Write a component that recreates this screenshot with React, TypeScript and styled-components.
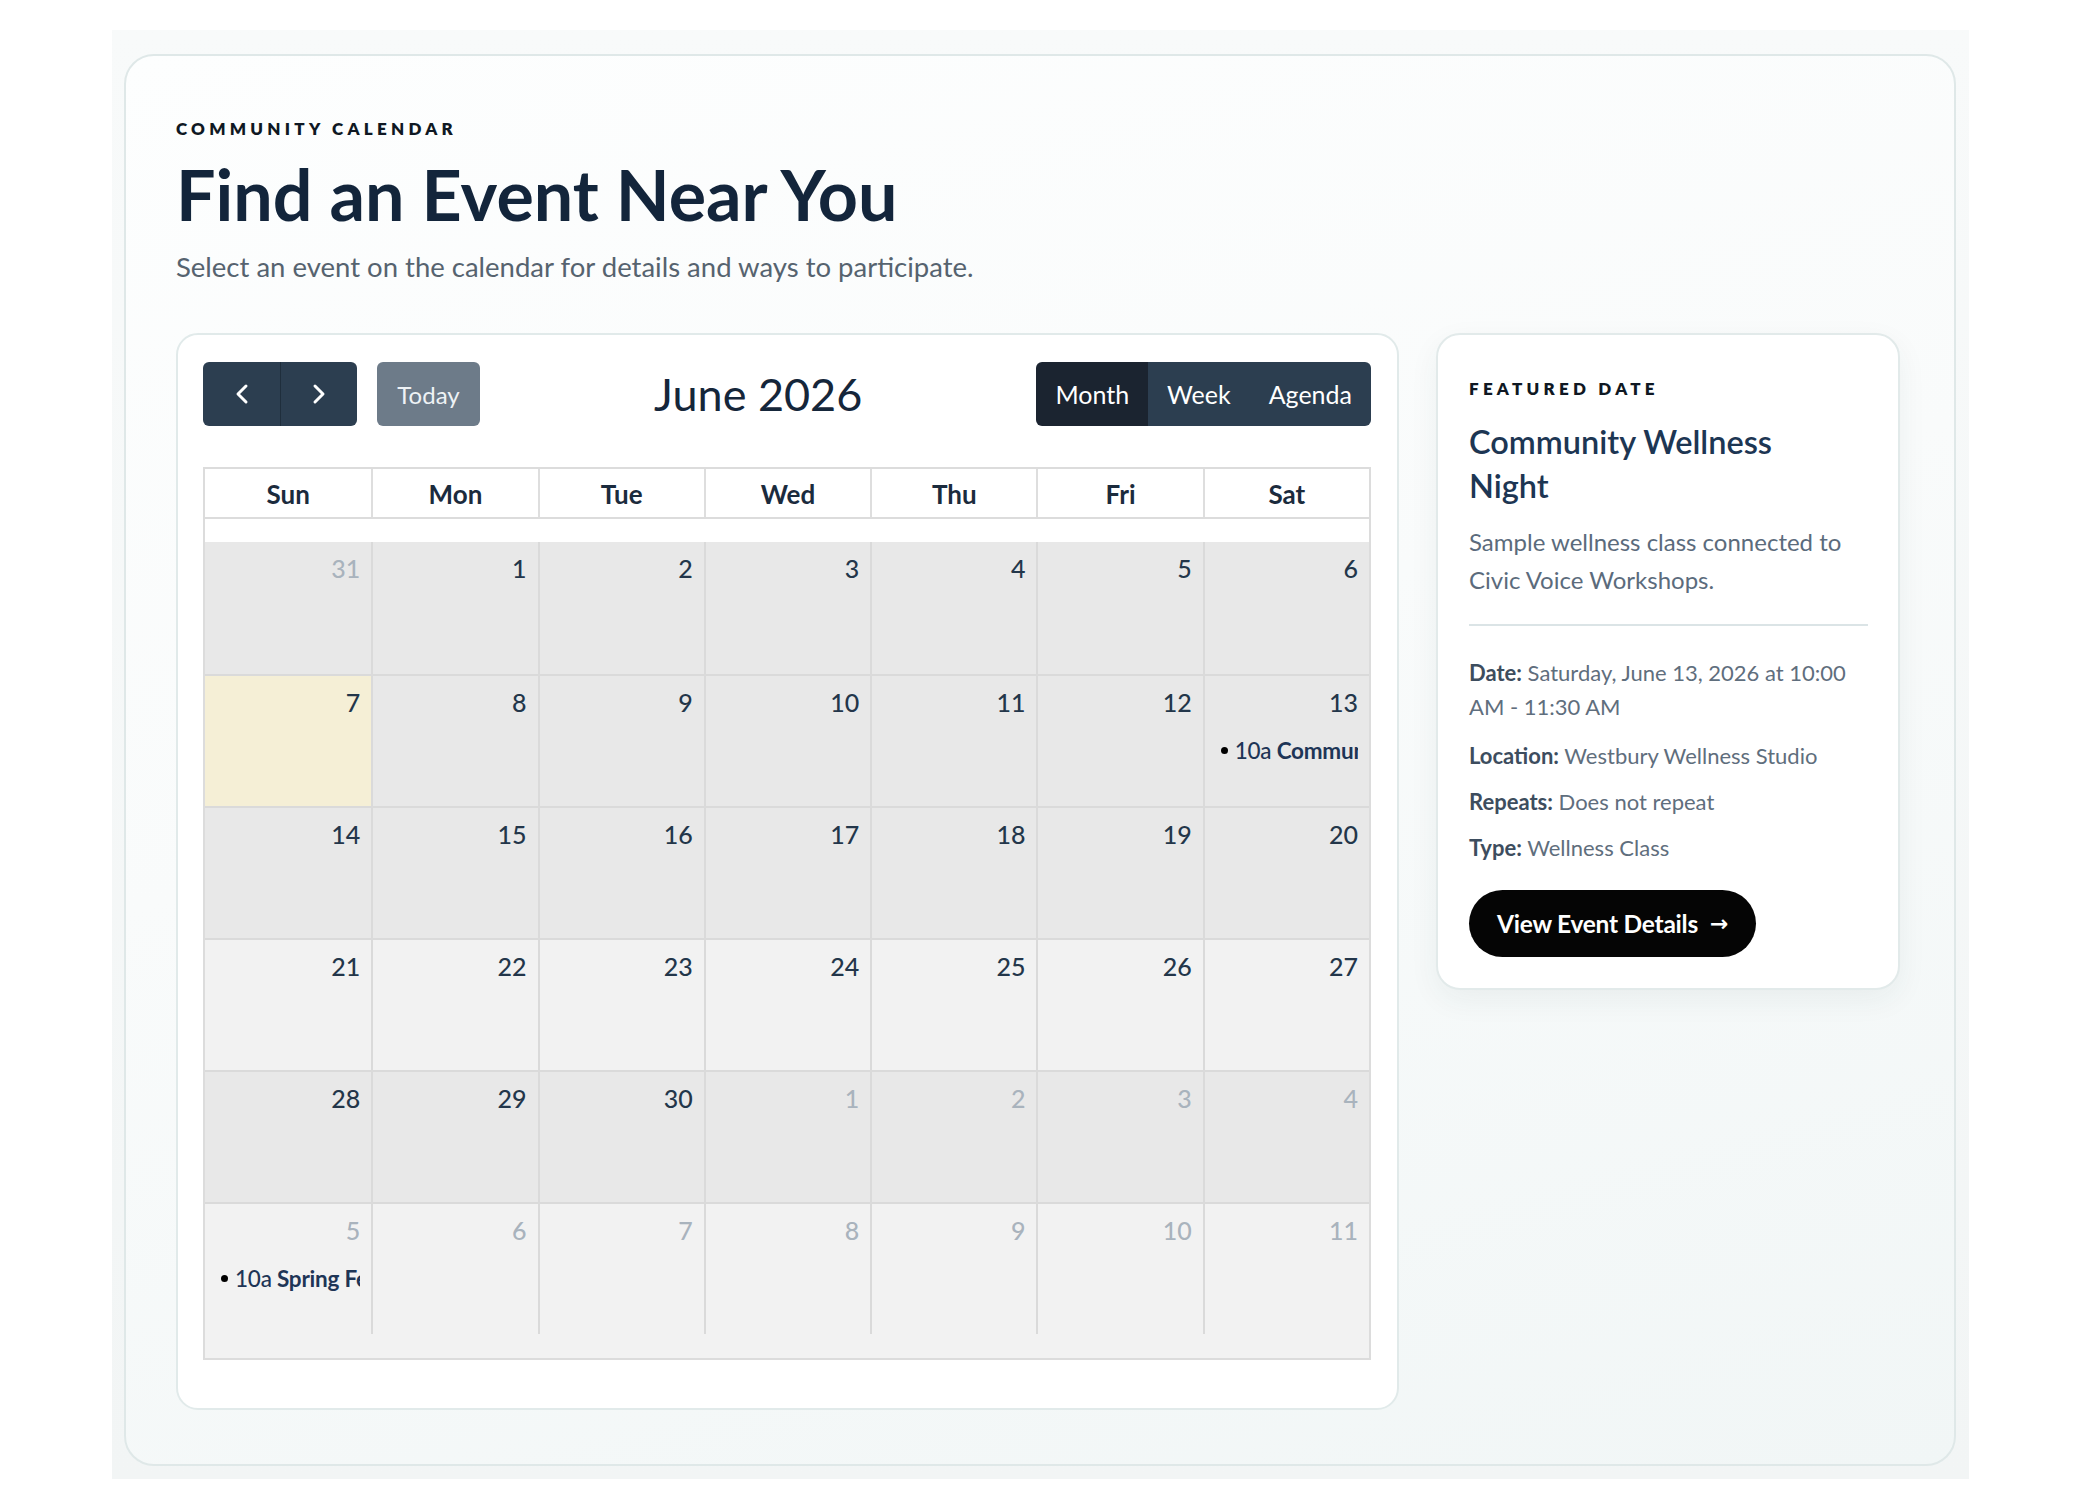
import styled, { createGlobalStyle } from "styled-components";

const GlobalStyle = createGlobalStyle`
  body {
    margin: 0;
    background: #ffffff;
    font-family: Lato, "Open Sans", "Noto Sans", sans-serif;
  }
  * {
    box-sizing: border-box;
  }
`;

const Shell = styled.div`
  margin: 30px 0 0 112px;
  width: 1857px;
  padding: 24px 13px 13px 12px;
  background: linear-gradient(180deg, #f8fafa 0%, #f2f5f5 100%);
`;

const Card = styled.section`
  border: 2px solid #dfe8e8;
  border-radius: 30px;
  background: linear-gradient(165deg, #fdfefe 0%, #f9fbfb 45%, #f1f6f6 100%);
  padding: 63px 54px 54px 50px;
`;

const Eyebrow = styled.div`
  font-size: 17px;
  font-weight: 800;
  letter-spacing: 0.25em;
  line-height: 1.2;
  text-transform: uppercase;
  color: #0f1823;
`;

const Title = styled.h1`
  margin: 17px 0 0;
  font-size: 70px;
  font-weight: 700;
  line-height: 77px;
  color: #13253b;
`;

const Lead = styled.p`
  margin: 16px 0 0;
  font-size: 27.5px;
  line-height: 35px;
  color: #56636f;
`;

const Layout = styled.div`
  display: grid;
  grid-template-columns: 1223px 1fr;
  gap: 37px;
  align-items: start;
  margin-top: 49px;
`;

/* calendar */

const CalendarPanel = styled.div`
  background: #ffffff;
  border: 2px solid #e1eaea;
  border-radius: 22px;
  padding: 27px 26px 48px 25px;
`;

const Toolbar = styled.div`
  display: flex;
  align-items: center;
  height: 64px;
  margin-bottom: 41px;
`;

const NavGroup = styled.div`
  display: flex;
  border-radius: 6px;
  overflow: hidden;
  background: #2c3e50;
`;

const NavButton = styled.button`
  width: 77px;
  height: 64px;
  border: none;
  background: transparent;
  display: flex;
  align-items: center;
  justify-content: center;
  cursor: pointer;
  & + & {
    border-left: 1px solid #1f2e3c;
  }
`;

const TodayButton = styled.button`
  margin-left: 20px;
  width: 103px;
  height: 64px;
  border: none;
  border-radius: 6px;
  background: #6d7b89;
  color: #eef2f5;
  font-family: inherit;
  font-size: 24px;
  cursor: pointer;
`;

const MonthLabel = styled.div`
  flex: 1;
  text-align: center;
  font-size: 45px;
  font-weight: 400;
  color: #15263a;
`;

const ViewGroup = styled.div`
  display: flex;
  border-radius: 6px;
  overflow: hidden;
`;

const ViewButton = styled.button<{ $active?: boolean }>`
  height: 64px;
  padding: 0 19px;
  border: none;
  background: ${(p) => (p.$active ? "#1b2430" : "#2c3e50")};
  color: #ffffff;
  font-family: inherit;
  font-size: 25px;
  cursor: pointer;
`;

const Grid = styled.div`
  border: 2px solid #dcdcdc;
  background: #f2f2f2;
`;

const HeadRow = styled.div`
  display: grid;
  grid-template-columns: repeat(7, 1fr);
  background: #ffffff;
  border-bottom: 2px solid #dcdcdc;
`;

const HeadCell = styled.div`
  height: 48px;
  padding-top: 2px;
  display: flex;
  align-items: center;
  justify-content: center;
  font-size: 26px;
  font-weight: 700;
  color: #1b2b3d;
  & + & {
    border-left: 2px solid #dedede;
  }
`;

const Strip = styled.div`
  height: 23px;
  background: #ffffff;
`;

const WeekRow = styled.div<{ $light?: boolean }>`
  display: grid;
  grid-template-columns: repeat(7, 1fr);
  height: 132px;
  background: ${(p) => (p.$light ? "#f2f2f2" : "#e8e8e8")};
  & + & {
    border-top: 2px solid #dadada;
  }
`;

const DayCell = styled.div<{ $today?: boolean }>`
  min-width: 0;
  padding: 11px 11px 0 0;
  background: ${(p) => (p.$today ? "#f5efd6" : "transparent")};
  & + & {
    border-left: 2px solid #dadada;
  }
`;

const DayNumber = styled.div<{ $muted?: boolean }>`
  text-align: right;
  font-size: 25px;
  line-height: 30px;
  font-weight: 500;
  color: ${(p) => (p.$muted ? "#a9b3bd" : "#23364a")};
`;

const EventLine = styled.div`
  margin-top: 20px;
  padding-left: 16px;
  display: flex;
  align-items: center;
  gap: 7px;
  height: 26px;
  white-space: nowrap;
  overflow: hidden;
  font-size: 22.5px;
  color: #1e3556;
`;

const Dot = styled.span`
  flex: none;
  width: 7px;
  height: 7px;
  border-radius: 50%;
  background: #000000;
`;

const EventLabel = styled.span`
  font-weight: 700;
  letter-spacing: -0.01em;
`;

const EventTime = styled.span`
  font-weight: 500;
`;

const Filler = styled.div`
  height: 24px;
`;

/* featured card */

const FeatureCard = styled.aside`
  background: #ffffff;
  border: 2px solid #e2eaea;
  border-radius: 24px;
  padding: 44px 30px 31px 31px;
  box-shadow: 0 10px 30px rgba(30, 60, 70, 0.06);
`;

const FeatureTitle = styled.h2`
  margin: 20px 0 0;
  max-width: 340px;
  font-size: 32.5px;
  font-weight: 600;
  line-height: 44px;
  color: #1d3653;
`;

const FeatureText = styled.p`
  margin: 15px 0 0;
  font-size: 24px;
  line-height: 38px;
  color: #5b6b7c;
`;

const Divider = styled.hr`
  border: none;
  border-top: 2px solid #dbe4e6;
  margin: 25px 0 30px;
`;

const Detail = styled.p<{ $spaced?: boolean }>`
  margin: 0 0 ${(p) => (p.$spaced ? "15px" : "12px")};
  font-size: 22px;
  line-height: 34px;
  color: #5f6e7d;
  b {
    color: #3d4d5e;
    font-weight: 700;
  }
`;

const DetailsButton = styled.button`
  margin-top: 13px;
  height: 67px;
  padding: 0 28px;
  display: inline-flex;
  align-items: center;
  gap: 12px;
  border: none;
  border-radius: 999px;
  background: #050505;
  color: #ffffff;
  font-family: inherit;
  font-size: 24.5px;
  font-weight: 700;
  letter-spacing: -0.01em;
  cursor: pointer;
`;

const Arrow = styled.span`
  font-size: 22px;
  font-family: "DejaVu Sans", sans-serif;
`;

const Chevron = ({ dir }: { dir: "left" | "right" }) => (
  <svg width="14" height="22" viewBox="0 0 14 22">
    <polyline
      points={dir === "left" ? "11,3 3,11 11,19" : "3,3 11,11 3,19"}
      fill="none"
      stroke="#ffffff"
      strokeWidth="3"
      strokeLinecap="round"
      strokeLinejoin="round"
    />
  </svg>
);

type Day = { n: number; muted?: boolean; today?: boolean; event?: { time: string; title: string } };

const week = (start: number, len: number, muted = false): Day[] =>
  Array.from({ length: len }, (_, i) => ({ n: start + i, muted }));

const weeks: { light?: boolean; days: Day[] }[] = [
  { days: [{ n: 31, muted: true }, ...week(1, 6)] },
  { days: week(7, 7) },
  { days: week(14, 7) },
  { light: true, days: week(21, 7) },
  { days: [...week(28, 3), ...week(1, 4, true)] },
  { light: true, days: week(5, 7, true) },
];

weeks[1].days[0].today = true;
weeks[1].days[6].event = { time: "10a", title: "Community Wellness Night" };
weeks[5].days[0].event = { time: "10a", title: "Spring Festival" };

const dayNames = ["Sun", "Mon", "Tue", "Wed", "Thu", "Fri", "Sat"];

const App: React.FC = () => {
  return (
    <>
      <GlobalStyle />
      <Shell>
        <Card>
          <Eyebrow>Community Calendar</Eyebrow>
          <Title>Find an Event Near You</Title>
          <Lead>Select an event on the calendar for details and ways to participate.</Lead>

          <Layout>
            <CalendarPanel>
              <Toolbar>
                <NavGroup>
                  <NavButton aria-label="Previous">
                    <Chevron dir="left" />
                  </NavButton>
                  <NavButton aria-label="Next">
                    <Chevron dir="right" />
                  </NavButton>
                </NavGroup>
                <TodayButton>Today</TodayButton>
                <MonthLabel>June 2026</MonthLabel>
                <ViewGroup>
                  <ViewButton $active>Month</ViewButton>
                  <ViewButton>Week</ViewButton>
                  <ViewButton>Agenda</ViewButton>
                </ViewGroup>
              </Toolbar>

              <Grid>
                <HeadRow>
                  {dayNames.map((d) => (
                    <HeadCell key={d}>{d}</HeadCell>
                  ))}
                </HeadRow>
                <Strip />
                {weeks.map((w, i) => (
                  <WeekRow key={i} $light={w.light}>
                    {w.days.map((d, j) => (
                      <DayCell key={j} $today={d.today}>
                        <DayNumber $muted={d.muted}>{d.n}</DayNumber>
                        {d.event && (
                          <EventLine>
                            <Dot />
                            <EventLabel>
                              <EventTime>{d.event.time}</EventTime> {d.event.title}
                            </EventLabel>
                          </EventLine>
                        )}
                      </DayCell>
                    ))}
                  </WeekRow>
                ))}
                <Filler />
              </Grid>
            </CalendarPanel>

            <FeatureCard>
              <Eyebrow>Featured Date</Eyebrow>
              <FeatureTitle>Community Wellness Night</FeatureTitle>
              <FeatureText>Sample wellness class connected to Civic Voice Workshops.</FeatureText>
              <Divider />
              <Detail $spaced>
                <b>Date:</b> Saturday, June 13, 2026 at 10:00 AM - 11:30 AM
              </Detail>
              <Detail>
                <b>Location:</b> Westbury Wellness Studio
              </Detail>
              <Detail>
                <b>Repeats:</b> Does not repeat
              </Detail>
              <Detail>
                <b>Type:</b> Wellness Class
              </Detail>
              <DetailsButton>
                View Event Details <Arrow>→</Arrow>
              </DetailsButton>
            </FeatureCard>
          </Layout>
        </Card>
      </Shell>
    </>
  );
};

export default App;
